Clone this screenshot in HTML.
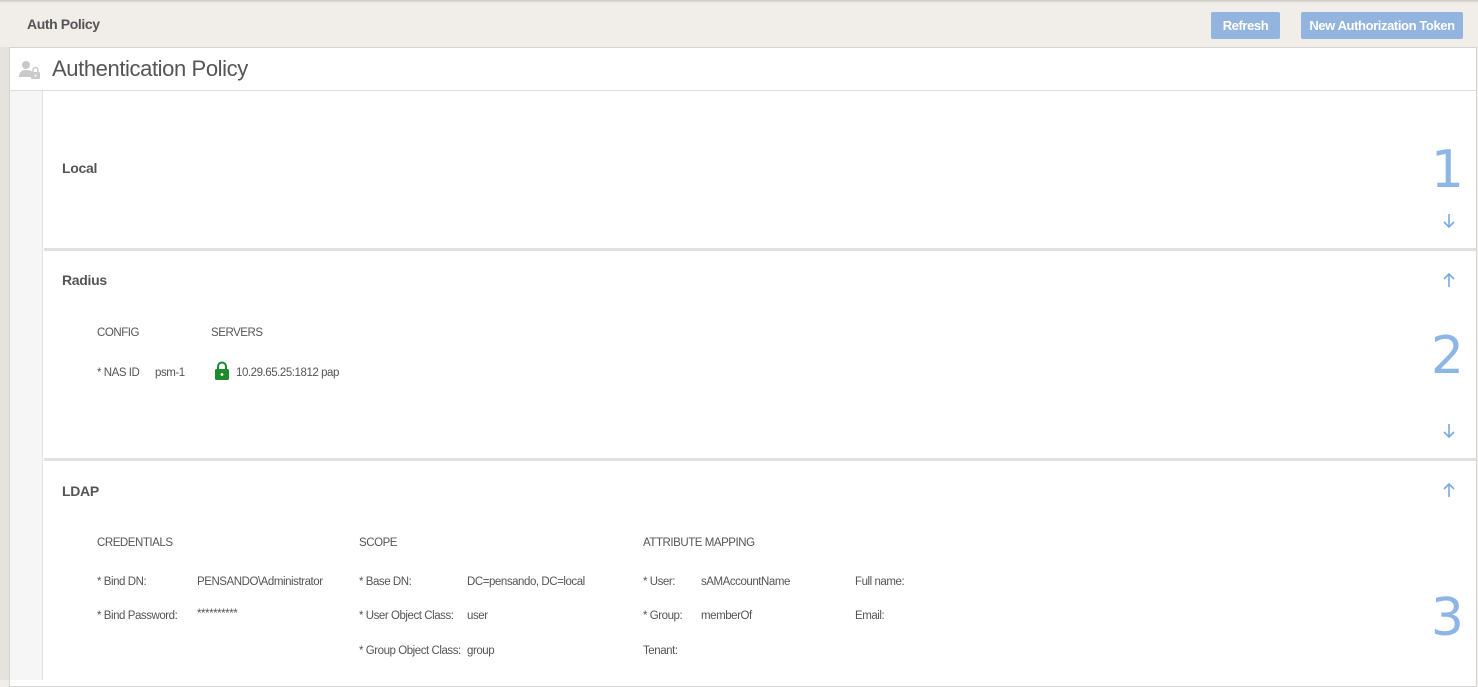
<!DOCTYPE html>
<html><head><meta charset="utf-8"><style>
*{margin:0;padding:0;box-sizing:border-box}
body{width:1478px;height:680px;overflow:hidden;background:#f1eeea;font-family:"Liberation Sans",sans-serif;color:#555;position:relative}
.a{position:absolute;white-space:nowrap}
.t{font-size:11.5px;letter-spacing:-0.45px;color:#555;top:0}
.h{font-size:14px;font-weight:bold;color:#555;letter-spacing:-0.3px}
.btn{position:absolute;top:12px;height:27px;background:#92b4de;color:#fff;font-weight:bold;font-size:13px;letter-spacing:-0.4px;border-radius:2px;text-align:center;line-height:27px}
.num{position:absolute;right:14px;color:#8db6e6;font-size:52px;font-family:"DejaVu Sans","Liberation Sans",sans-serif;font-weight:normal}
.ar{position:absolute;left:1441px}
</style></head><body>
<div style="position:absolute;left:0;top:0;width:1478px;height:3px;background:linear-gradient(#c9c6c2,#f1eeea)"></div>
<div class="a" style="left:27px;top:16px;font-size:14px;font-weight:bold;color:#555;letter-spacing:-0.4px">Auth Policy</div>
<div class="btn" style="left:1211px;width:69px">Refresh</div>
<div class="btn" style="left:1301px;width:162px">New Authorization Token</div>
<div style="position:absolute;left:0;top:47px;width:9px;height:633px;background:#e6e3df"></div>
<div style="position:absolute;left:9px;top:47px;width:1468px;height:640px;background:#fff;border:1px solid #d3d3d3"></div>
<div style="position:absolute;left:10px;top:90px;width:1466px;height:1px;background:#ddd"></div>
<svg class="a" style="left:18px;top:60px" width="26" height="20" viewBox="0 0 26 20"><circle cx="8" cy="5" r="4" fill="#c9c9c9"/><path d="M1 17c0-5 3-7 7-7s6 1 7 3v4z" fill="#c9c9c9"/><rect x="13" y="12" width="9" height="7" rx="1" fill="#c9c9c9"/><path d="M15 12v-2a2.5 2.5 0 015 0v2" stroke="#c9c9c9" stroke-width="1.5" fill="none"/><circle cx="17.5" cy="15.5" r="1" fill="#fff"/></svg>
<div class="a" style="left:52px;top:56px;font-size:22px;color:#555;letter-spacing:-0.4px">Authentication Policy</div>
<div style="position:absolute;left:10px;top:91px;width:33px;height:589px;background:#f6f6f6;border-right:1px solid #e2e2e2"></div>
<div style="position:absolute;left:44px;top:248px;width:1432px;height:3px;background:#e0e0e0"></div>
<div style="position:absolute;left:44px;top:458px;width:1432px;height:3px;background:#e0e0e0"></div>
<div class="a h" style="left:62px;top:160px">Local</div>
<div class="num" style="top:140px">1</div>
<div class="ar" style="top:212px"><svg width="16" height="18"><path d="M8 2v13M3 10l5 5 5-5" stroke="#7aa9e0" stroke-width="1.6" fill="none"/></svg></div>
<div class="a h" style="left:62px;top:272px">Radius</div>
<div class="ar" style="top:271px"><svg width="16" height="18"><path d="M8 16V3M3 8l5-5 5 5" stroke="#7aa9e0" stroke-width="1.6" fill="none"/></svg></div>
<div class="a t" style="left:97px;top:327px">CONFIG</div>
<div class="a t" style="left:211px;top:327px">SERVERS</div>
<div class="a t" style="left:97px;top:367px">* NAS ID</div>
<div class="a t" style="left:155px;top:367px">psm-1</div>
<svg class="a" style="left:214px;top:361px" width="16" height="19" viewBox="0 0 16 19"><path d="M4 8V5.5a4 4 0 018 0V8" stroke="#1e8a2e" stroke-width="2" fill="none"/><rect x="1" y="8" width="14" height="11" rx="1.5" fill="#1e8a2e"/><circle cx="8" cy="13.5" r="1.4" fill="#fff"/></svg>
<div class="a t" style="left:236px;top:367px">10.29.65.25:1812 pap</div>
<div class="num" style="top:326px">2</div>
<div class="ar" style="top:422px"><svg width="16" height="18"><path d="M8 2v13M3 10l5 5 5-5" stroke="#7aa9e0" stroke-width="1.6" fill="none"/></svg></div>
<div class="a h" style="left:62px;top:483px">LDAP</div>
<div class="ar" style="top:481px"><svg width="16" height="18"><path d="M8 16V3M3 8l5-5 5 5" stroke="#7aa9e0" stroke-width="1.6" fill="none"/></svg></div>
<div class="a t" style="left:97px;top:537px">CREDENTIALS</div>
<div class="a t" style="left:97px;top:576px">* Bind DN:</div>
<div class="a t" style="left:197px;top:576px">PENSANDO\Administrator</div>
<div class="a t" style="left:97px;top:610px">* Bind Password:</div>
<div class="a t" style="left:197px;top:608px">**********</div>
<div class="a t" style="left:359px;top:537px">SCOPE</div>
<div class="a t" style="left:359px;top:576px">* Base DN:</div>
<div class="a t" style="left:467px;top:576px">DC=pensando, DC=local</div>
<div class="a t" style="left:359px;top:610px">* User Object Class:</div>
<div class="a t" style="left:467px;top:610px">user</div>
<div class="a t" style="left:359px;top:645px">* Group Object Class:</div>
<div class="a t" style="left:467px;top:645px">group</div>
<div class="a t" style="left:643px;top:537px">ATTRIBUTE MAPPING</div>
<div class="a t" style="left:643px;top:576px">* User:</div>
<div class="a t" style="left:701px;top:576px">sAMAccountName</div>
<div class="a t" style="left:643px;top:610px">* Group:</div>
<div class="a t" style="left:701px;top:610px">memberOf</div>
<div class="a t" style="left:643px;top:645px">Tenant:</div>
<div class="a t" style="left:855px;top:576px">Full name:</div>
<div class="a t" style="left:855px;top:610px">Email:</div>
<div class="num" style="top:588px">3</div>
</body></html>
